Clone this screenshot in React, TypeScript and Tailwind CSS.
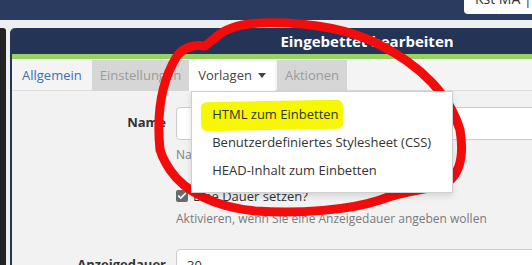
import { Check } from 'lucide-react';

const tabs = [
  { label: 'Allgemein', kind: 'link' },
  { label: 'Einstellungen', kind: 'off' },
  { label: 'Vorlagen', kind: 'active' },
  { label: 'Aktionen', kind: 'off' },
];

const templates = [
  'HTML zum Einbetten',
  'Benutzerdefiniertes Stylesheet (CSS)',
  'HEAD-Inhalt zum Einbetten',
];

export default function App() {
  return (
    <div className="relative w-[532px] h-[265px] overflow-hidden bg-[#eef0f0] font-['Open_Sans',sans-serif] text-[13px] text-[#333]">
      {/* Top bar */}
      <div className="h-[20px] bg-[#2b3b60] flex justify-end">
        <div className="w-[68px] h-[14px] bg-white rounded-bl-[4px] overflow-hidden">
          <div className="-mt-[11px] pl-[11px] text-[14px] leading-[20px] text-[#333] whitespace-nowrap">Kst MA | Verwaltung</div>
        </div>
      </div>

      <div className="flex pt-[8px] gap-[4px]">
        {/* Sidebar edge */}
        <div className="w-[6px] h-[240px] bg-[#232323] rounded-tr-[3px] shrink-0" />

        {/* Panel */}
        <div className="w-[712px] shrink-0 border-l-2 border-[#26345a] bg-[#f2f2f2] rounded-tl-[5px]">
          <div className="h-[26px] bg-[#233457] rounded-tl-[4px] flex items-center justify-center">
            <span className="text-white font-bold text-[15px]">Eingebettet bearbeiten</span>
          </div>
          <div className="h-[5px] bg-[#95d163]" />

          {/* Tabs */}
          <div className="h-[32px] pt-[1px] bg-[#f4f4f4] border-b border-[#dcdcdc] flex">
            {tabs.map((t) =>
              t.kind === 'active' ? (
                <div key={t.label} className="relative h-[31px] px-[9px] bg-white flex items-center gap-[6px] text-[#444] mr-[2px]">
                  {t.label}
                  <span className="w-0 h-0 border-x-[4px] border-x-transparent border-t-[5px] border-t-[#444]" />
                  {/* Dropdown */}
                  <div className="absolute z-10 left-[2px] top-[31px] w-[262px] bg-white border border-[#cfcfcf] shadow-[0_3px_6px_rgba(0,0,0,0.12)] pt-[9px] pb-[7px]">
                    {templates.map((item, i) => (
                      <div key={item} className="relative h-[28px] pl-[20px] flex items-center text-[#333] whitespace-nowrap">
                        {i === 0 && (
                          <span className="absolute left-[9px] top-[0px] w-[142px] h-[29px] bg-[#f7f700] rounded-[6px] -rotate-[1deg]" />
                        )}
                        <span className="relative">{item}</span>
                      </div>
                    ))}
                  </div>
                </div>
              ) : (
                <div
                  key={t.label}
                  className={
                    t.kind === 'link'
                      ? 'h-[31px] px-[10px] flex items-center text-[#3b6fb6]'
                      : 'h-[31px] px-[8px] flex items-center bg-[#d6d6d6] text-[#9a9a9a]'
                  }
                >
                  {t.label}
                </div>
              )
            )}
          </div>

          {/* Form */}
          <div className="pt-[16px]">
            <div className="flex gap-[10px]">
              <div className="w-[154px] text-right font-bold pt-[6px]">Name</div>
              <div className="flex-1">
                <div className="h-[33px] bg-white border border-[#cccccc] rounded-l-[4px]" />
                <div className="mt-[6px] text-[12px] text-[#808080] leading-[17px]">Name des eingebetteten Inhalts</div>
                <div className="mt-[24px] flex items-center gap-[5px] leading-[18px]">
                  <span className="w-[12px] h-[12px] rounded-[2px] bg-[#6a6a6a] flex items-center justify-center">
                    <Check className="w-[10px] h-[10px] text-white" strokeWidth={4} />
                  </span>
                  Eine Dauer setzen?
                </div>
                <div className="mt-[5px] text-[12px] text-[#7a7a7a] leading-[17px]">Aktivieren, wenn Sie eine Anzeigedauer angeben wollen</div>
              </div>
            </div>
            <div className="flex gap-[10px] mt-[22px]">
              <div className="w-[154px] text-right font-bold pt-[6px]">Anzeigedauer</div>
              <div className="flex-1 h-[33px] bg-white border border-[#cccccc] rounded-l-[4px] px-[10px] pt-[6px]">30</div>
            </div>
          </div>
        </div>
      </div>

      {/* Red hand-drawn annotation */}
      <svg className="absolute inset-0 pointer-events-none" width="532" height="265" viewBox="0 0 532 265">
        <path
          d="M 160 150 C 157 120, 159 85, 177 56 C 184 47, 195 44, 205 46 L 215 38 C 225 28, 240 24, 260 23 C 300 22, 345 27, 380 45 C 420 65, 450 95, 460 130 C 465 160, 458 180, 440 186 C 420 190, 400 192, 380 200 C 350 210, 300 214, 255 211 C 215 207, 185 192, 170 170 C 163 159, 160 152, 160 148"
          fill="none"
          stroke="#f20c0c"
          strokeWidth="9"
          strokeLinecap="round"
          strokeLinejoin="round"
        />
      </svg>
    </div>
  );
}
